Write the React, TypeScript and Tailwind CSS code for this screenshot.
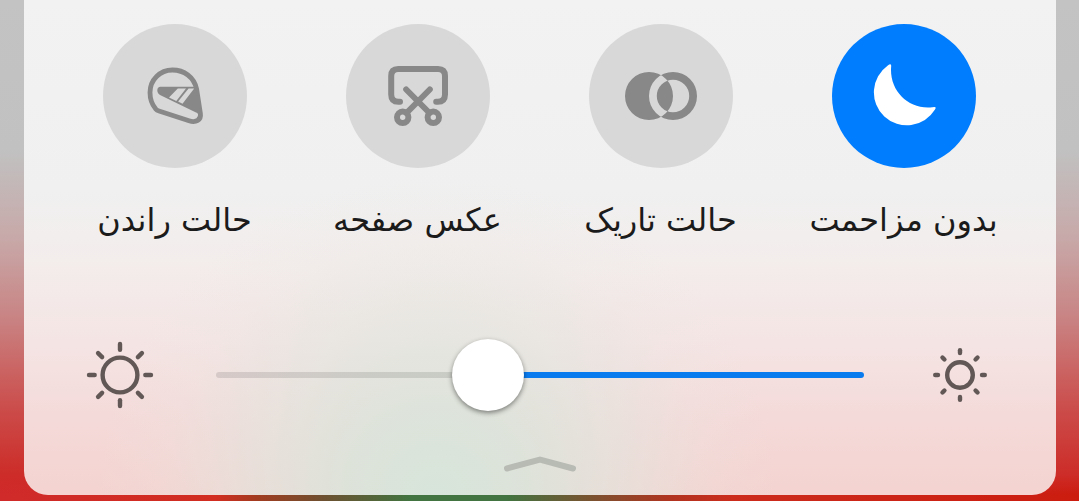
import { useState, type ReactNode } from "react";

function MoonIcon() {
  return (
    <svg viewBox="0 0 72 72" className="size-18" fill="currentColor" aria-hidden="true">
      <path d="M19.8 5.4Q23.4 2.6 23.2 6C20.8 30 40 50 64.3 47.3Q69.2 46 67 49.6A33 33 0 1 1 19.8 5.4Z" />
    </svg>
  );
}

function DarkModeIcon() {
  return (
    <svg viewBox="0 0 72 72" className="size-18" fill="currentColor" aria-hidden="true">
      <path
        fillRule="evenodd"
        d="M0 36a24 24 0 1 0 48 0a24 24 0 1 0-48 0ZM24 36a24 24 0 1 0 48 0a24 24 0 1 0-48 0ZM31.8 36a16.2 16.2 0 1 0 32.4 0a16.2 16.2 0 1 0-32.4 0Z"
      />
    </svg>
  );
}

function ScreenshotIcon() {
  return (
    <svg
      viewBox="0 0 72 72"
      className="size-18"
      fill="none"
      stroke="currentColor"
      strokeWidth="6"
      strokeLinecap="round"
      aria-hidden="true"
    >
      <path d="M18 41.8H16.5Q9.2 41.8 9.2 34.5V16Q9.2 9 16.2 9H56Q63 9 63 16V34.5Q63 41.8 55.7 41.8H54.2" />
      <path d="M24.2 29.5L47.5 53M47.8 29.5L24.5 53" />
      <circle cx="20.7" cy="57.3" r="5.7" />
      <circle cx="51.3" cy="57.3" r="5.7" />
    </svg>
  );
}

function HelmetIcon() {
  return (
    <svg viewBox="0 0 72 72" className="size-18" aria-hidden="true">
      <path
        fill="none"
        stroke="currentColor"
        strokeWidth="4.8"
        d="M33.4 10C21 10 11 20 11 32.5C11 39 13.3 44.8 16.6 48.8Q18 50.4 20 51L50 60.8C57 63 62.4 60 61.4 53.5L57.6 29C55 17 45 10 33.4 10Z"
      />
      <path
        fill="currentColor"
        fillRule="evenodd"
        d="M21.5 26.8H57L61.5 57.5L59 54Q58.5 53 56.5 52.2L21.5 35.2C17 33 17.5 26.8 21.5 26.8ZM38.8 28.6L30 37.4L37.3 40.9L47 28.6ZM49.6 28.6L39.1 41.6L43.5 43.7L55.2 28.6Z"
      />
    </svg>
  );
}

const rayAngles = [0, 45, 90, 135, 180, 225, 270, 315];

function SunIcon({ radius, rayStart, rayEnd }: { radius: number; rayStart: number; rayEnd: number }) {
  return (
    <svg
      viewBox="0 0 72 72"
      className="size-18 shrink-0 text-[#625957]"
      fill="none"
      stroke="currentColor"
      strokeWidth="4.4"
      strokeLinecap="round"
      aria-hidden="true"
    >
      <circle cx="36" cy="36" r={radius} />
      {rayAngles.map((angle) => (
        <path key={angle} d={`M36 ${36 - rayStart}V${36 - rayEnd}`} transform={`rotate(${angle} 36 36)`} />
      ))}
    </svg>
  );
}

const tiles: { label: string; icon: ReactNode }[] = [
  { label: "بدون مزاحمت", icon: <MoonIcon /> },
  { label: "حالت تاریک", icon: <DarkModeIcon /> },
  { label: "عکس صفحه", icon: <ScreenshotIcon /> },
  { label: "حالت راندن", icon: <HelmetIcon /> },
];

export default function App() {
  const [enabled, setEnabled] = useState([true, false, false, false]);
  const [brightness, setBrightness] = useState(59);

  const toggle = (index: number) => setEnabled((prev) => prev.map((on, i) => (i === index ? !on : on)));

  return (
    <div
      dir="rtl"
      className="min-h-screen bg-[linear-gradient(to_right,#d02a2a_0%,#d22d20_20%,#a03c20_24%,#6d5030_30%,#417440_38%,#417440_47%,#6d5a34_53%,#b03420_62%,#cc2c1c_68%,#cc1c10_100%)] font-['DejaVu_Sans',sans-serif]"
    >
      <div className="bg-[linear-gradient(to_bottom,#c3c3c3_0px,#c1c1c1_150px,#c8a8a8_240px,#c98282_320px,#cb4c4a_410px,#cd2c28_475px,transparent_494px)] pr-[23px] pb-1.5 pl-6">
        <main className="rounded-b-3xl bg-[radial-gradient(ellipse_340px_320px_at_40%_100%,#d7e5da_0%,#dae5dbd9_28%,#dfe7df88_54%,#e8e8e22c_80%,#f0e8e400_100%),linear-gradient(to_bottom,#f2f2f2_0px,#f0f0f0_190px,#f3edec_260px,#f4e5e4_340px,#f4dad9_420px,#f4d3d0_494px)] pt-6">
          <div className="grid grid-cols-4 pr-[31px] pl-[29px]">
            {tiles.map((tile, index) => (
              <button
                key={tile.label}
                type="button"
                aria-pressed={enabled[index]}
                onClick={() => toggle(index)}
                className="flex flex-col items-center gap-8"
              >
                <span
                  className={
                    enabled[index]
                      ? "flex size-36 items-center justify-center rounded-full bg-[#007dff] text-white"
                      : "flex size-36 items-center justify-center rounded-full bg-[#d8d8d8] text-[#888888]"
                  }
                >
                  {tile.icon}
                </span>
                <span className="text-[32px] leading-10 whitespace-nowrap text-[#1b1b1b]">{tile.label}</span>
              </button>
            ))}
          </div>

          <div className="mt-[99px] flex items-center gap-[60px] px-[60px]">
            <SunIcon radius={12.8} rayStart={22} rayEnd={24.8} />
            <input
              type="range"
              aria-label="روشنایی"
              min={0}
              max={100}
              value={brightness}
              onChange={(event) => setBrightness(Number(event.target.value))}
              style={{
                backgroundImage: `linear-gradient(to left, #0a7bee ${brightness}%, #0000001c ${brightness}%)`,
              }}
              className="h-1.5 min-w-0 flex-1 appearance-none rounded-full outline-none [&::-webkit-slider-thumb]:size-18 [&::-webkit-slider-thumb]:appearance-none [&::-webkit-slider-thumb]:rounded-full [&::-webkit-slider-thumb]:bg-white [&::-webkit-slider-thumb]:shadow-[0_2px_5px_rgba(0,0,0,0.45)]"
            />
            <SunIcon radius={17.4} rayStart={25.3} rayEnd={31} />
          </div>

          <div className="flex justify-center pt-11 pb-[22px]">
            <button type="button" aria-label="بستن" className="text-[#b8bab4]">
              <svg
                viewBox="0 0 72 18"
                className="h-[18px] w-18"
                fill="none"
                stroke="currentColor"
                strokeWidth="6"
                strokeLinecap="round"
                aria-hidden="true"
              >
                <path d="M3 13.5L36 4.6L69 13.5" />
              </svg>
            </button>
          </div>
        </main>
      </div>
    </div>
  );
}
